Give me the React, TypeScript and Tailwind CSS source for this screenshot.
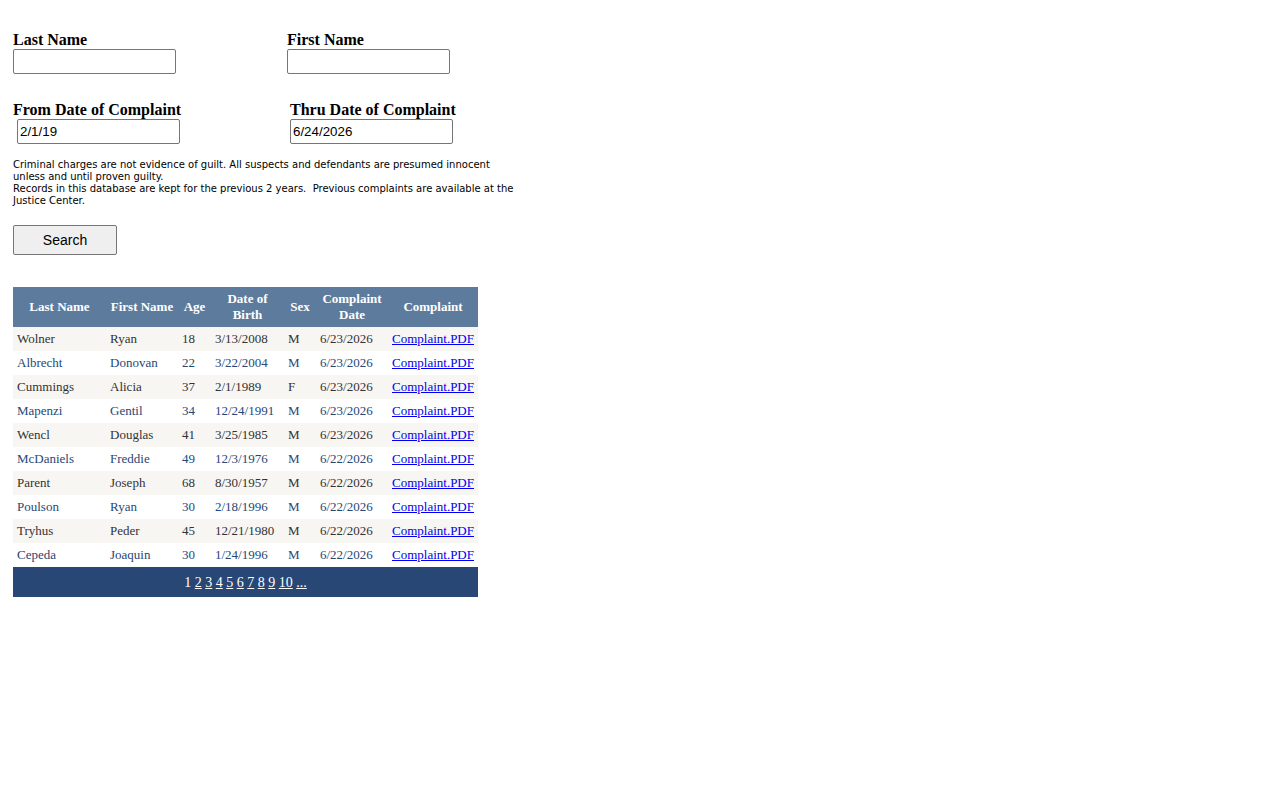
import React from "react";

const rows = [
  ["Wolner", "Ryan", "18", "3/13/2008", "M", "6/23/2026"],
  ["Albrecht", "Donovan", "22", "3/22/2004", "M", "6/23/2026"],
  ["Cummings", "Alicia", "37", "2/1/1989", "F", "6/23/2026"],
  ["Mapenzi", "Gentil", "34", "12/24/1991", "M", "6/23/2026"],
  ["Wencl", "Douglas", "41", "3/25/1985", "M", "6/23/2026"],
  ["McDaniels", "Freddie", "49", "12/3/1976", "M", "6/22/2026"],
  ["Parent", "Joseph", "68", "8/30/1957", "M", "6/22/2026"],
  ["Poulson", "Ryan", "30", "2/18/1996", "M", "6/22/2026"],
  ["Tryhus", "Peder", "45", "12/21/1980", "M", "6/22/2026"],
  ["Cepeda", "Joaquin", "30", "1/24/1996", "M", "6/22/2026"],
];

const widths = ["w-[93px]", "w-[72px]", "w-[33px]", "w-[73px]", "w-[32px]", "w-[72px]", "w-[90px]"];

const inputCls =
  "block w-[163px] h-[25px] border border-[#767676] rounded-[2px] px-[2px] text-[13.33px] text-black bg-white font-['Liberation_Sans',Arial,sans-serif]";

export default function App() {
  return (
    <div className="min-h-[800px] bg-white text-black font-['Liberation_Serif','Times_New_Roman',serif]">
      <div className="pl-[13px] pt-[31px]">
        {/* name fields */}
        <div className="flex">
          <div className="w-[274px]">
            <div className="text-[16px] font-bold leading-[18px]">Last Name</div>
            <input className={inputCls} />
          </div>
          <div>
            <div className="text-[16px] font-bold leading-[18px]">First Name</div>
            <input className={inputCls} />
          </div>
        </div>

        {/* date fields */}
        <div className="flex mt-[27px]">
          <div className="w-[277px]">
            <div className="text-[16px] font-bold leading-[18px]">From Date of Complaint</div>
            <input className={inputCls + " ml-[4px]"} defaultValue="2/1/19" />
          </div>
          <div>
            <div className="text-[16px] font-bold leading-[18px]">Thru Date of Complaint</div>
            <input className={inputCls} defaultValue="6/24/2026" />
          </div>
        </div>

        <div className="mt-[15px] w-[510px] text-[10px] leading-[12px] font-['DejaVu_Sans',Verdana,sans-serif]">
          Criminal charges are not evidence of guilt. All suspects and defendants are presumed innocent
          unless and until proven guilty.
          <br />
          Records in this database are kept for the previous 2 years.&nbsp; Previous complaints are available at the
          Justice Center.
        </div>

        <button className="mt-[18px] w-[104px] h-[30px] border border-[#767676] rounded-[2px] bg-[#efefef] text-[14px] font-['Liberation_Sans',Arial,sans-serif]">
          Search
        </button>

        {/* results grid */}
        <table className="mt-[32px] border-collapse text-[13px]">
          <thead>
            <tr className="bg-[#5D7B9D] text-white font-bold h-[40px]">
              {["Last Name", "First Name", "Age", "Date of Birth", "Sex", "Complaint Date", "Complaint"].map((h, i) => (
                <th key={h} className={widths[i] + " px-[4px] text-center leading-[16px] font-bold"}>
                  {h === "Date of Birth" ? (
                    <>Date of<br />Birth</>
                  ) : h === "Complaint Date" ? (
                    <>Complaint<br />Date</>
                  ) : (
                    h
                  )}
                </th>
              ))}
            </tr>
          </thead>
          <tbody>
            {rows.map((r, i) => (
              <tr
                key={i}
                className={i % 2 === 0 ? "bg-[#F7F6F3] text-[#333333] h-[24px]" : "bg-white text-[#284775] h-[24px]"}
              >
                {r.map((c, j) => (
                  <td key={j} className="px-[4px] leading-[16px] whitespace-nowrap">
                    {c}
                  </td>
                ))}
                <td className="px-[4px] leading-[16px] whitespace-nowrap">
                  <a href="#" className="text-[#0000EE] underline">
                    Complaint.PDF
                  </a>
                </td>
              </tr>
            ))}
            <tr className="bg-[#284775] text-white h-[30px]">
              <td colSpan={7} className="text-center text-[14px]">
                <span>1</span>{" "}
                {["2", "3", "4", "5", "6", "7", "8", "9", "10", "..."].map((p) => (
                  <React.Fragment key={p}>
                    <a href="#" className="underline text-white">
                      {p}
                    </a>{" "}
                  </React.Fragment>
                ))}
              </td>
            </tr>
          </tbody>
        </table>
      </div>
    </div>
  );
}
